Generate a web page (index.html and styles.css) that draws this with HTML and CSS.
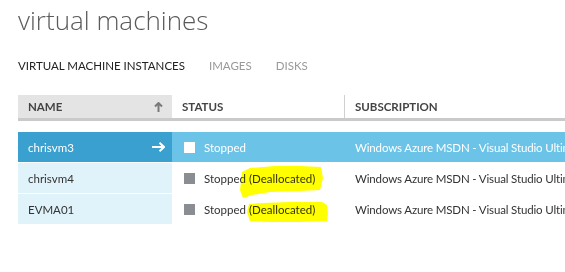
FILE: index.html
```html
<!DOCTYPE html>
<html lang="en">
<head>
  <meta charset="UTF-8">
  <title>virtual machines</title>
  <link rel="stylesheet" href="styles.css">
</head>
<body>
  <div class="page">
    <h1 class="page-title">virtual machines</h1>
    <div class="tabs">
      <span class="tab active">VIRTUAL MACHINE INSTANCES</span>
      <span class="tab">IMAGES</span>
      <span class="tab">DISKS</span>
    </div>

    <div class="grid">
      <div class="grid-head">
        <div class="col col-name">NAME
          <svg class="sort-icon" width="9" height="10" viewBox="0 0 9 10"><path d="M4.5 1 V10 M1 4.5 L4.5 1 L8 4.5" fill="none" stroke="#7a7a7a" stroke-width="2"/></svg>
        </div>
        <div class="col col-status">STATUS</div>
        <div class="col col-sub">SUBSCRIPTION</div>
      </div>

      <div class="grid-row selected">
        <div class="col col-name">chrisvm3
          <svg class="go-icon" width="13" height="10" viewBox="0 0 13 10"><path d="M0 5 H12 M7.5 0.8 L12 5 L7.5 9.2" fill="none" stroke="#fff" stroke-width="2"/></svg>
        </div>
        <div class="col col-status"><span class="state-box"></span>Stopped</div>
        <div class="col col-sub">Windows Azure MSDN - Visual Studio Ultimate</div>
      </div>
      <div class="grid-row">
        <div class="col col-name">chrisvm4</div>
        <div class="col col-status"><span class="state-box"></span>Stopped (Deallocated)</div>
        <div class="col col-sub">Windows Azure MSDN - Visual Studio Ultimate</div>
      </div>
      <div class="grid-row">
        <div class="col col-name">EVMA01</div>
        <div class="col col-status"><span class="state-box"></span>Stopped (Deallocated)</div>
        <div class="col col-sub">Windows Azure MSDN - Visual Studio Ultimate</div>
      </div>
    </div>

    <!-- highlighter marks drawn over the screenshot -->
    <svg class="marker" width="565" height="272" viewBox="0 0 565 272">
      <path d="M242 172 L250 168 L275 166 L300 166 L321 167 L323 178 L320 190 L300 191 L270 192 L252 195 L243 198 L240 190 Z" fill="#ffff00"/>
      <path d="M249 204 L262 203 L290 202 L322 202 L327 205 L328 214 L327 221 L300 222 L270 222 L250 221 L247 212 Z" fill="#ffff00"/>
    </svg>
  </div>
</body>
</html>
```

FILE: styles.css
```css
body { margin: 0; font-family: Lato, "Open Sans", sans-serif; color: #333; background: #fff; overflow: hidden; }
.page { position: relative; width: 565px; height: 272px; overflow: hidden; padding-left: 18px; box-sizing: border-box; }
.page-title { margin: 0; padding-top: 2px; font-family: "Open Sans", sans-serif; font-weight: 300; font-size: 26px; line-height: 36px; color: #5a5a5a; }
.tabs { display: flex; gap: 24px; margin-top: 20px; font-size: 11.5px; line-height: 16px; }
.tab { color: #999; }
.tab.active { color: #222; }

.grid { margin-top: 21px; white-space: nowrap; }
.grid-head, .grid-row { display: grid; grid-template-columns: 154px 172px 1fr; }
.grid-head { height: 23px; border-bottom: 3px solid #cacaca; font-size: 11.5px; font-weight: 700; color: #444; margin-bottom: 11px; }
.grid-head .col { display: flex; align-items: center; padding-left: 10px; }
.grid-head .col-name { background: #e4e4e4; position: relative; }
.grid-head .col-sub { border-left: 1px solid #d0d0d0; }
.sort-icon { position: absolute; right: 9px; top: 7px; }

.grid-row { height: 30px; border-bottom: 1px solid #fff; font-size: 11.5px; }
.grid-row .col { display: flex; align-items: center; overflow: hidden; }
.grid-row .col-name { background: #e0f3fa; padding-left: 10px; position: relative; }
.grid-row .col-status { padding-left: 12px; }
.grid-row .col-sub { padding-left: 11px; letter-spacing: -0.15px; }
.state-box { width: 11px; height: 11px; background: #8a8d92; margin-right: 9px; }
.grid-row.selected { background: #6bc3e8; color: #fff; }
.grid-row.selected .col-name { background: #3aa0cf; }
.grid-row.selected .state-box { background: #fff; }
.go-icon { position: absolute; right: 7px; top: 10px; }

.marker { position: absolute; left: 0; top: 0; mix-blend-mode: multiply; pointer-events: none; }
```
